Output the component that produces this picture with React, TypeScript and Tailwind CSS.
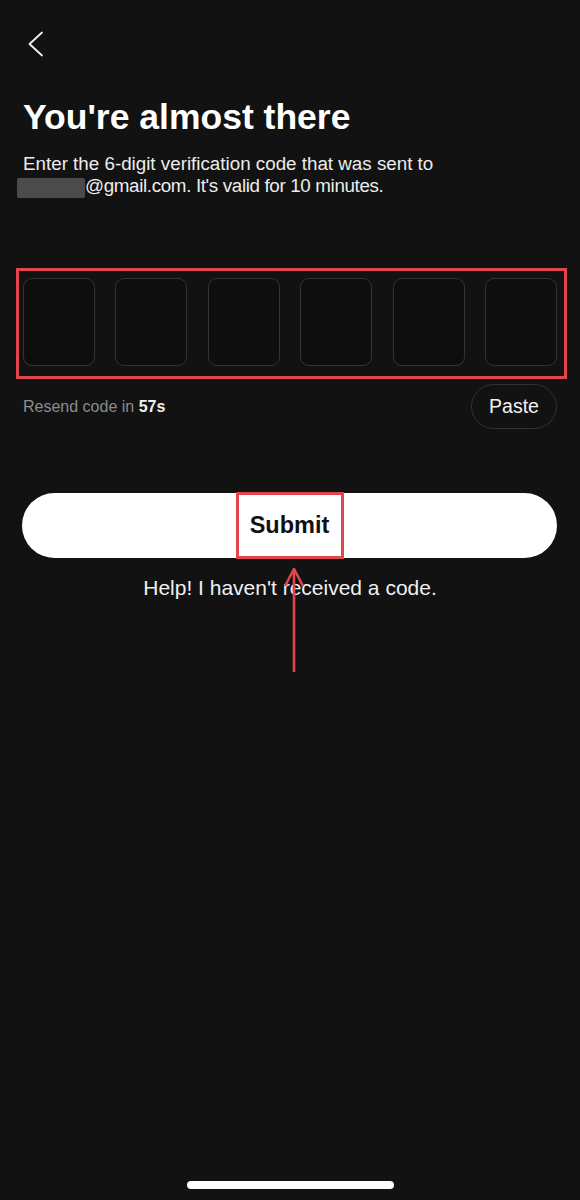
import React from 'react';

const CodeBox = () => (
  <div className="h-[88px] w-[72px] rounded-[9px] border border-[#343434] bg-[#0e0e0e]" />
);

const App = () => {
  return (
    <div className="relative flex h-[1200px] w-full flex-col overflow-hidden bg-[#121212] px-[23px] font-['Liberation_Sans',Arial,sans-serif] text-white">
      {/* Back */}
      <button className="mt-[31px] ml-[4px] h-[26px] w-[17px]">
        <svg width="17" height="26" viewBox="0 0 17 26" fill="none">
          <path d="M15 1.5 L2.5 13 L15 24.5" stroke="#f2f2f2" strokeWidth="1.8" strokeLinecap="round" strokeLinejoin="round" />
        </svg>
      </button>

      <h1 className="mt-[40px] text-[35.5px] font-bold leading-[40px]">You're almost there</h1>
      <p className="mt-[16px] text-[18.8px] leading-[22px] text-[#ececec]">
        Enter the 6-digit verification code that was sent to
        <br />
        <span className="-ml-[6px] inline-block h-[20px] w-[68px] rounded-[2px] bg-[#4b4b4b] align-[-6px]" />
        <span className="tracking-[-0.35px]">@gmail.com. It's valid for 10 minutes.</span>
      </p>

      {/* Code inputs */}
      <div className="relative mt-[80px]">
        <div className="flex justify-between">
          {[0, 1, 2, 3, 4, 5].map((i) => (
            <CodeBox key={i} />
          ))}
        </div>
        <div className="pointer-events-none absolute -top-[10px] -right-[10px] -bottom-[13px] -left-[7px] border-[3px] border-[#e0464b]" />
      </div>

      <div className="mt-[18px] flex h-[45px] items-center justify-between">
        <span className="text-[16px] text-[#8c8c8c]">
          Resend code in <span className="font-bold text-[#f0f0f0]">57s</span>
        </span>
        <button className="h-[45px] w-[86px] rounded-full border border-[#333333] text-[19.5px] text-[#f2f2f2]">
          Paste
        </button>
      </div>

      <button className="relative mt-[64px] -ml-[1px] flex h-[65px] w-[calc(100%+1px)] items-center justify-center rounded-full bg-white text-[23.5px] font-bold text-[#111111]">
        Submit
        <span className="pointer-events-none absolute -top-[1px] -bottom-[1px] left-1/2 w-[108px] -translate-x-1/2 border-[3px] border-[#e0464b]" />
      </button>

      <p className="mt-[16px] text-center text-[21px] leading-[28px] text-[#f0f0f0]">
        Help! I haven't received a code.
      </p>

      {/* annotation arrow */}
      <svg className="pointer-events-none absolute left-[283px] top-[566px]" width="22" height="108" viewBox="0 0 22 108" fill="none">
        <path d="M11 3 L11 106" stroke="#e0464b" strokeWidth="2.6" />
        <path d="M2 20 L11 3 L20 20" stroke="#e0464b" strokeWidth="2.6" strokeLinejoin="round" />
      </svg>

      {/* home indicator */}
      <div className="mt-auto mb-[11px] self-center h-[8px] w-[207px] rounded-full bg-white" />
    </div>
  );
};

export default App;
